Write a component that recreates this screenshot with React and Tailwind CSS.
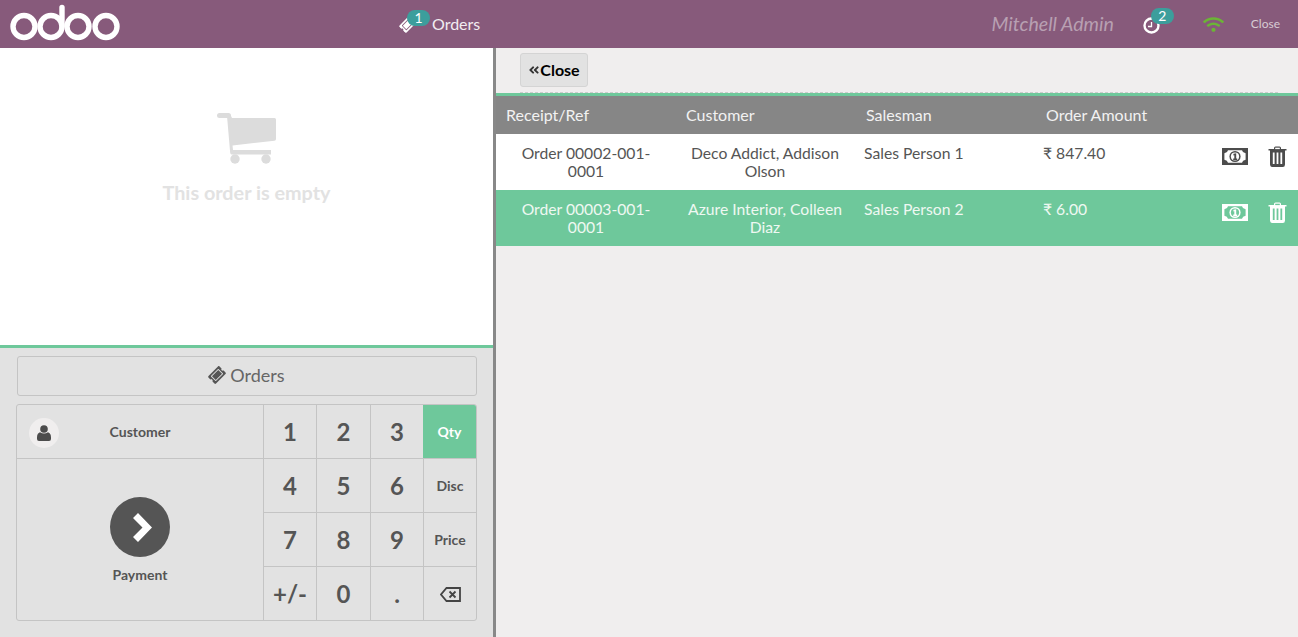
import { FaTicketAlt, FaWifi, FaAngleDoubleLeft } from 'react-icons/fa';

const lato = { fontFamily: 'Lato, sans-serif' };

function Logo() {
  return (
    <svg width="112" height="38" viewBox="0 0 112 38" className="ml-[9px] mt-[4px]">
      <g fill="none" stroke="#fff" strokeWidth="5.4">
        <circle cx="15" cy="22.5" r="11" />
        <circle cx="42" cy="22.5" r="11" />
        <circle cx="69" cy="22.5" r="11" />
        <circle cx="97" cy="22.5" r="11" />
        <path d="M53 22 L53 3.5" strokeLinecap="round" />
      </g>
    </svg>
  );
}

function CartIcon() {
  return (
    <svg width="60" height="52" viewBox="0 0 60 52" fill="#dcdcdc">
      <rect x="0" y="1" width="14" height="5" rx="2.5" />
      <path d="M10 4 L14 4 L15 6 H57.5 Q59 6 59 7.5 V27 Q59 28.5 57.5 28.7 L15.5 33.5 L16 38 H54 V42.5 H15 Q13.5 42.5 13.2 41 Z" />
      <circle cx="18" cy="47" r="4.7" />
      <circle cx="49" cy="47" r="4.7" />
    </svg>
  );
}

function UserIcon() {
  return (
    <svg width="14" height="16" viewBox="0 0 14 16" fill="#4c4c4c">
      <circle cx="7" cy="4" r="3.8" />
      <path d="M3 7.2 Q7 9.8 11 7.2 Q14 8 14 12.5 V14 Q14 16 12 16 H2 Q0 16 0 14 V12.5 Q0 8 3 7.2 Z" />
    </svg>
  );
}

function MoneyIcon({ color, hole }) {
  return (
    <svg width="26" height="17" viewBox="0 0 26 17">
      <rect x="0" y="0" width="26" height="17" fill={color} />
      <path d="M6 2.2 H20 Q20.5 4.8 23.6 5.2 V11.8 Q20.5 12.2 20 14.8 H6 Q5.5 12.2 2.4 11.8 V5.2 Q5.5 4.8 6 2.2 Z" fill={hole} />
      <circle cx="13" cy="8.5" r="5.6" fill={color} />
      <circle cx="13" cy="8.5" r="4.1" fill={hole} />
      <path d="M11.4 5.8 L14.2 5.3 V10.6 H15.2 V12 H11.2 V10.6 H12.3 V7.2 L11.4 7.4 Z" fill={color} />
    </svg>
  );
}

function TrashIcon({ color, hole }) {
  return (
    <svg width="19" height="21" viewBox="0 0 19 21">
      <path d="M6 3 V2 Q6 .5 7.5 .5 H11.5 Q13 .5 13 2 V3 H18.5 V4.6 H17 V18.5 Q17 21 14.8 21 H4.2 Q2 21 2 18.5 V4.6 H.5 V3 Z" fill={color} />
      <rect x="7.2" y="1.7" width="4.6" height="1.4" fill={hole} />
      <rect x="4.8" y="6.5" width="1.8" height="11.5" fill={hole} />
      <rect x="8.6" y="6.5" width="1.8" height="11.5" fill={hole} />
      <rect x="12.4" y="6.5" width="1.8" height="11.5" fill={hole} />
    </svg>
  );
}

function BackIcon() {
  return (
    <svg width="21" height="15" viewBox="0 0 21 15" fill="none" stroke="#444" strokeWidth="1.8">
      <path d="M6.5 1 H20 V14 H6.5 L1 7.5 Z" />
      <path d="M9.5 4.5 L15.5 10.5 M15.5 4.5 L9.5 10.5" strokeWidth="1.8" />
    </svg>
  );
}

function Badge({ children, className }) {
  return (
    <span className={`absolute flex h-[16px] w-[23px] items-center justify-center rounded-full bg-[#3c9e9c] text-[14px] leading-none text-white ${className}`}>
      {children}
    </span>
  );
}

function Key({ children, className = '' }) {
  return (
    <div className={`flex items-center justify-center border-b border-l border-[#c4c4c4] text-[#555] ${className}`}>
      {children}
    </div>
  );
}

const numRows = [
  ['1', '2', '3', 'Qty'],
  ['4', '5', '6', 'Disc'],
  ['7', '8', '9', 'Price'],
  ['+/-', '0', '.', 'back'],
];

function Numpad() {
  return (
    <div className="grid w-[213px] shrink-0 grid-cols-[53px_54px_53px_53px] grid-rows-[54px_54px_54px_54px]">
      {numRows.flat().map(k => {
        if (k === 'back') {
          return <Key key={k} className="border-b-0"><BackIcon /></Key>;
        }
        if (k === 'Qty') {
          return <Key key={k} className="border-l-0 bg-[#6ec89b] text-[14px] font-bold text-white">{k}</Key>;
        }
        if (k === 'Disc' || k === 'Price') {
          return <Key key={k} className="text-[14px] font-bold">{k}</Key>;
        }
        return (
          <Key key={k} className={`text-[24px] font-bold ${k === '+/-' || k === '0' || k === '.' ? 'border-b-0' : ''}`}>
            {k}
          </Key>
        );
      })}
    </div>
  );
}

const orders = [
  { ref: 'Order 00002-001-0001', customer: 'Deco Addict, Addison Olson', sales: 'Sales Person 1', amount: '₹ 847.40' },
  { ref: 'Order 00003-001-0001', customer: 'Azure Interior, Colleen Diaz', sales: 'Sales Person 2', amount: '₹ 6.00', active: true },
];

function OrderRow({ order }) {
  const active = order.active;
  const iconColor = active ? '#fff' : '#4c4c4c';
  const iconHole = active ? '#6ec89b' : '#fff';
  return (
    <div className={`flex h-[56px] text-[15.7px] leading-[18px] ${active ? 'bg-[#6ec89b] text-[#eef8f2]' : 'bg-white text-[#555]'}`}>
      <div className="w-[180px] px-[10px] pt-[10px] text-center">{order.ref}</div>
      <div className="w-[178px] px-[4px] pt-[10px] text-center">{order.customer}</div>
      <div className="w-[179px] pl-[10px] pt-[10px]">{order.sales}</div>
      <div className="w-[179px] pl-[10px] pt-[10px]">{order.amount}</div>
      <div className="flex flex-1 items-start gap-[20px] pl-[10px] pt-[12px]">
        <span className="mt-[2px]">
          <MoneyIcon color={iconColor} hole={iconHole} />
        </span>
        <TrashIcon color={iconColor} hole={iconHole} />
      </div>
    </div>
  );
}

export default function App() {
  return (
    <div className="flex h-[637px] w-[1298px] flex-col overflow-hidden" style={lato}>
      {/* top bar */}
      <header className="flex h-[48px] shrink-0 bg-[#875a7b] text-white">
        <Logo />
        <div className="relative ml-[279px] flex items-center">
          <FaTicketAlt className="h-[15px] w-[15px] -rotate-45" />
          <Badge className="left-[7px] top-[10px]">1</Badge>
          <span className="ml-[17px] text-[16px] text-[#f2edf1]">Orders</span>
        </div>
        <div className="ml-auto flex items-center">
          <span className="mr-[29px] text-[19.6px] italic text-[#b8a0b2]">Mitchell Admin</span>
          <div className="relative mr-[43px] mt-[2px] flex h-[17px] w-[17px] items-center">
            <svg width="17" height="17" viewBox="0 0 17 17" fill="none" stroke="#fff" strokeWidth="2.4">
              <circle cx="8.5" cy="8.5" r="7" />
              <path d="M8.5 5 V9.5 H5" strokeWidth="1.3" />
            </svg>
            <Badge className="left-[8px] top-[-9px]">2</Badge>
          </div>
          <FaWifi className="mr-[27px] h-[21px] w-[21px] text-[#6bb536]" />
          <span className="mr-[18px] text-[12px] text-[#d8ccd4]">Close</span>
        </div>
      </header>

      <div className="flex min-h-0 flex-1">
        {/* left pane */}
        <div className="flex w-[496px] shrink-0 flex-col border-r-[3px] border-[#888]">
          <div className="flex h-[297px] flex-col items-center bg-white pt-[64px]">
            <CartIcon />
            <div className="mt-[15px] text-[19.8px] font-bold leading-[26px] text-[#e2e2e2]">This order is empty</div>
          </div>
          <div className="flex-1 border-t-[3px] border-[#6ec89b] bg-[#e2e2e2] pl-[16px] pr-[16px] pt-[8px]">
            <div className="ml-[1px] flex h-[40px] w-[460px] items-center justify-center gap-[5px] rounded-[3px] border border-[#c4c4c4] pb-[2px] text-[18px] text-[#666]">
              <FaTicketAlt className="h-[16px] w-[16px] -rotate-45 text-[#555]" />
              Orders
            </div>
            <div className="mt-[8px] flex h-[217px] w-[461px] overflow-hidden rounded-[3px] border border-[#c4c4c4]">
              <div className="flex w-[246px] shrink-0 flex-col">
                <div className="relative flex h-[54px] items-center justify-center border-b border-[#c4c4c4] text-[14px] font-bold text-[#555]">
                  <span className="absolute left-[12px] top-[13px] flex h-[30px] w-[30px] items-center justify-center rounded-full bg-[#f0eeee]">
                    <UserIcon />
                  </span>
                  Customer
                </div>
                <div className="flex flex-1 flex-col items-center pt-[38px] text-[14px] font-bold text-[#555]">
                  <span className="flex h-[60px] w-[60px] items-center justify-center rounded-full bg-[#555]">
                    <svg width="19" height="29" viewBox="0 0 19 29" fill="#fff" className="ml-[4px]">
                      <path d="M0 5 L5 0 L19 14.5 L5 29 L0 24 L9.5 14.5 Z" />
                    </svg>
                  </span>
                  <span className="mt-[7px]">Payment</span>
                </div>
              </div>
              <Numpad />
            </div>
          </div>
        </div>

        {/* right pane */}
        <div className="flex min-w-0 flex-1 flex-col bg-[#f0eeee]">
          <div className="h-[45px] pl-[24px] pr-[20px] pt-[5px]">
            <div className="h-[40px] border-b border-dashed border-[#cccccc]">
              <button className="flex h-[34px] w-[68px] items-center justify-center rounded-[3px] border border-[#d4d4d4] bg-[#e2e2e2] text-[16px] font-bold text-black">
                <FaAngleDoubleLeft className="h-[12px] w-[12px] text-[#333]" />
                Close
              </button>
            </div>
          </div>
          <div className="h-[41px] border-t-[3px] border-[#6ec89b] bg-[#868686] text-[16px] text-[#f2f2f2]">
            <div className="flex h-[38px] items-center">
              <span className="w-[180px] pl-[10px]">Receipt/Ref</span>
              <span className="w-[180px] pl-[10px]">Customer</span>
              <span className="w-[180px] pl-[10px]">Salesman</span>
              <span className="pl-[10px]">Order Amount</span>
            </div>
          </div>
          {orders.map(o => <OrderRow key={o.ref} order={o} />)}
        </div>
      </div>
    </div>
  );
}
